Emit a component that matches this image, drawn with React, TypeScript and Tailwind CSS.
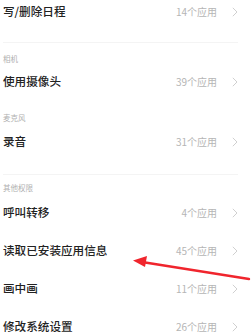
const font = { fontFamily: '"Noto Sans CJK SC", "Noto Sans", sans-serif' };

function Row({ title, count, h = 'h-[38px]' }: { title: string; count: string; h?: string }) {
  return (
    <div className={`flex items-center justify-between ${h}`}>
      <span className="text-[11.6px] leading-none font-medium text-[#222]">{title}</span>
      <div className="flex items-center">
        <span className="text-[10px] leading-none text-[#b5b5b5]">{count}</span>
        <svg width="6" height="10" viewBox="0 0 6 10" className="ml-[15px]">
          <path d="M0.8 0.8 L5 5 L0.8 9.2" fill="none" stroke="#d0d0d0" strokeWidth="1" />
        </svg>
      </div>
    </div>
  );
}

function Label({ text, h }: { text: string; h: string }) {
  return (
    <div className={`flex items-end ${h}`}>
      <span className="text-[7.5px] leading-[8px] text-[#b0b0b0]">{text}</span>
    </div>
  );
}

export default function App() {
  return (
    <div className="relative w-[252px] h-[332px] overflow-hidden bg-white" style={font}>
      <div className="pl-[3px] pr-[14px]">
        <Row title="写/删除日程" count="14个应用" h="h-[23px]" />
        <div className="mt-[19px] h-px bg-[#f4f4f4]" />
        <Label text="相机" h="h-[20px]" />
        <Row title="使用摄像头" count="39个应用" />
        <Label text="麦克风" h="h-[22px] pb-[1px]" />
        <Row title="录音" count="31个应用" />
        <div className="mt-[13px] h-px bg-[#f4f4f4]" />
        <Label text="其他权限" h="h-[19px] pb-[2px]" />
        <Row title="呼叫转移" count="4个应用" />
        <Row title="读取已安装应用信息" count="45个应用" />
        <Row title="画中画" count="11个应用" />
        <Row title="修改系统设置" count="26个应用" />
      </div>
      <svg className="absolute left-0 top-0" width="252" height="332" viewBox="0 0 252 332">
        <line x1="249" y1="279" x2="142" y2="262" stroke="#f0252d" strokeWidth="2.4" strokeLinecap="round" />
        <polygon points="133,260.5 147,256 145,267" fill="#f0252d" />
      </svg>
    </div>
  );
}
